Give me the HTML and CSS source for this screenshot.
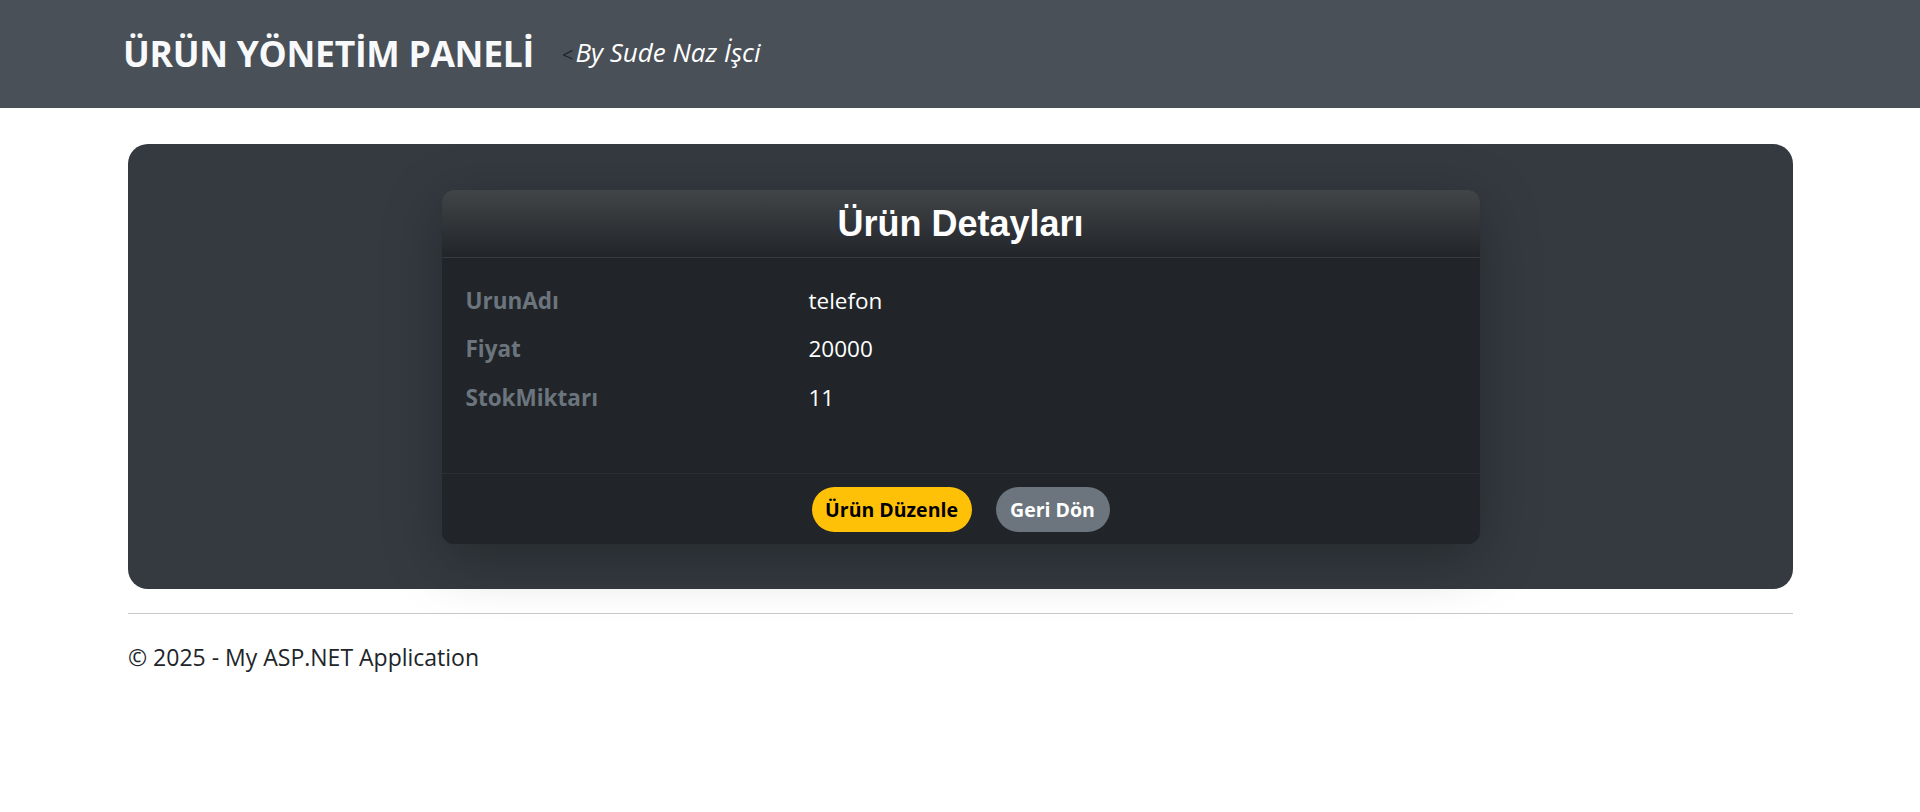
FILE: index.html
```html
<!DOCTYPE html>
<html lang="tr">
<head>
<meta charset="utf-8">
<title>Ürün Detayları</title>
<link rel="stylesheet" href="styles.css">
</head>
<body>
<header class="topbar">
  <div class="brand">ÜRÜN YÖNETİM PANELİ</div>
  <div class="byline"><span class="lt">&lt;</span><span class="by">By Sude Naz İşci</span></div>
</header>
<main class="page">
  <section class="stage">
    <div class="card">
      <div class="card-head"><h3 class="card-title">Ürün Detayları</h3></div>
      <div class="card-body">
        <div class="row"><span class="label">UrunAdı</span><span class="value">telefon</span></div>
        <div class="row"><span class="label">Fiyat</span><span class="value">20000</span></div>
        <div class="row"><span class="label">StokMiktarı</span><span class="value">11</span></div>
      </div>
      <div class="card-foot">
        <a class="btn btn-warn">Ürün Düzenle</a>
        <a class="btn btn-gray">Geri Dön</a>
      </div>
    </div>
  </section>
  <hr class="rule">
  <footer class="foot">© 2025 - My ASP.NET Application</footer>
</main>
</body>
</html>
```
FILE: styles.css
```css
html, body {
  margin: 0;
  padding: 0;
  background: #ffffff;
  font-family: "Open Sans", "Noto Sans", sans-serif;
  color: #212529;
}

.topbar {
  height: 108px;
  background: #495057;
  display: flex;
  align-items: center;
  padding-left: 123px;
  box-sizing: border-box;
}

.brand {
  font-family: "Open Sans", sans-serif;
  font-weight: 700;
  font-size: 35.5px;
  color: #f8f9fa;
  letter-spacing: -0.3px;
  line-height: 1;
}

.byline {
  margin-left: 28px;
  display: flex;
  align-items: baseline;
  margin-top: -4px;
}

.lt {
  font-size: 20px;
  color: #212529;
  margin-right: 2px;
}

.by {
  font-style: italic;
  font-size: 26px;
  color: #ffffff;
}

.page {
  padding: 36px 127px 0 128px;
}

.stage {
  background: #343a40;
  border-radius: 20px;
  padding: 46px 0 45px;
  display: flex;
  justify-content: center;
}

.card {
  width: 1038px;
  background: #212529;
  border-radius: 12px;
  box-shadow: 0 15px 60px rgba(0, 0, 0, 0.28);
  overflow: hidden;
}

.card-head {
  height: 67px;
  background: linear-gradient(to bottom, #424548, #212529);
  border-bottom: 1px solid #373b3f;
  display: flex;
  align-items: center;
  justify-content: center;
}

.card-title {
  margin: 0;
  font-family: "Liberation Sans", Arial, sans-serif;
  font-weight: 700;
  font-size: 36px;
  color: #ffffff;
  line-height: 1;
}

.card-body {
  padding: 18px 24px 51px;
}

.row {
  display: grid;
  grid-template-columns: 343px 1fr;
  align-items: center;
  height: 48.5px;
}

.label {
  font-family: "Open Sans", sans-serif;
  font-weight: 700;
  font-size: 22.5px;
  color: #6c757d;
}

.value {
  font-family: "Open Sans", sans-serif;
  font-size: 22.5px;
  color: #ffffff;
}

.card-foot {
  border-top: 1px solid #2b2f33;
  padding: 13px 0 12px;
  display: flex;
  justify-content: center;
  gap: 24px;
}

.btn {
  height: 45px;
  box-sizing: border-box;
  border-radius: 23px;
  display: inline-flex;
  align-items: center;
  justify-content: center;
  font-family: "Open Sans", sans-serif;
  font-weight: 700;
  font-size: 19.5px;
  padding: 0;
}

.btn-warn {
  background: #ffc107;
  color: #000000;
  width: 160px;
}

.btn-gray {
  background: #6c757d;
  color: #ffffff;
  width: 114px;
}

.rule {
  margin: 24px 0 0;
  border: 0;
  border-top: 1px solid #c8c8c8;
}

.foot {
  padding-top: 27px;
  font-size: 23px;
  color: #212529;
}
```
